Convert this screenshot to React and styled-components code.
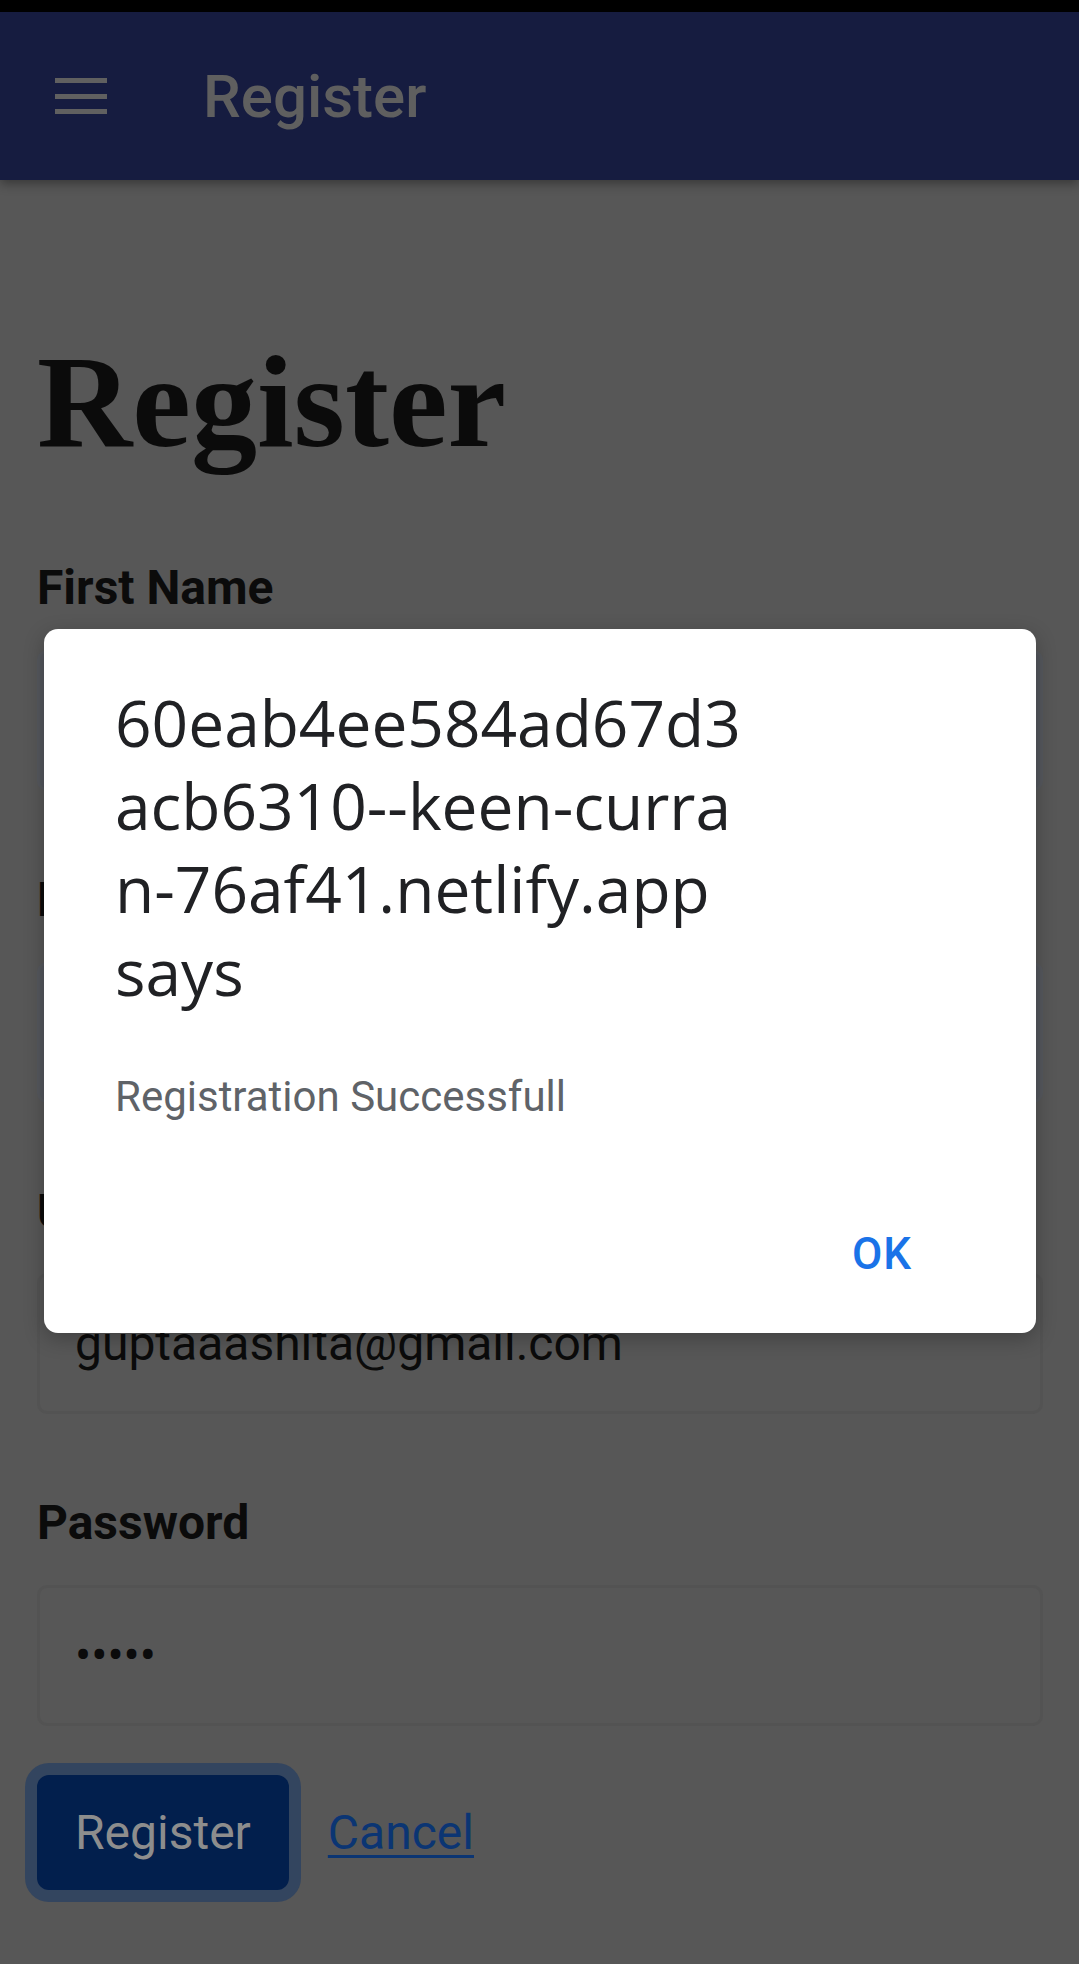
import styled, { createGlobalStyle } from "styled-components";

const GlobalStyle = createGlobalStyle`
  html, body {
    margin: 0;
    padding: 0;
    background: #575757;
  }
  body {
    width: 1079px;
    min-height: 1964px;
    overflow: hidden;
    font-family: Roboto, "Liberation Sans", sans-serif;
  }
  * {
    box-sizing: border-box;
  }
`;

const Screen = styled.div`
  position: relative;
  width: 1079px;
  height: 1964px;
  background: #575757;
`;

const StatusBar = styled.div`
  height: 12px;
  background: #000;
`;

const TopBar = styled.header`
  height: 168px;
  display: flex;
  align-items: center;
  padding-left: 55px;
  gap: 96px;
  background: #161c40;
  box-shadow: 0 4px 10px rgba(0, 0, 0, 0.35);
`;

const BarTitle = styled.span`
  font-family: Roboto, sans-serif;
  font-weight: 500;
  font-size: 60px;
  color: #5f5f5f;
`;

const Main = styled.main`
  padding: 143px 36px 0 37px;
`;

const Heading = styled.h1`
  margin: 0 0 78px;
  font-family: "Liberation Serif", serif;
  font-weight: 700;
  font-size: 132px;
  line-height: 1.2;
  color: #0b0b0b;
`;

const Field = styled.div`
  display: flex;
  flex-direction: column;
  gap: 33px;
  margin-bottom: 80px;
`;

const Label = styled.label`
  font-family: Roboto, sans-serif;
  font-weight: 700;
  font-size: 48px;
  line-height: 1.2;
  color: #0b0b0b;
`;

const Input = styled.input`
  width: 100%;
  height: 141px;
  padding: 0 35px;
  border: 3px solid ${(p) => (p.$autofill ? "#55585d" : "#535353")};
  border-radius: 10px;
  background: ${(p) => (p.$autofill ? "#53565c" : "#575757")};
  font-family: Roboto, sans-serif;
  font-size: 48px;
  color: #0b0b0b;
  outline: none;
`;

const Actions = styled.div`
  display: flex;
  align-items: center;
  gap: 39px;
  margin-top: -31px;
`;

const PrimaryButton = styled.button`
  height: 115px;
  padding: 0 38px;
  border: none;
  border-radius: 12px;
  background: #021f4d;
  box-shadow: 0 0 0 12px #33455f;
  font-family: Roboto, sans-serif;
  font-size: 48px;
  color: #8d8d8d;
`;

const LinkButton = styled.a`
  font-family: Roboto, sans-serif;
  font-size: 48px;
  color: #0b3573;
  text-decoration: underline;
  text-underline-offset: 6px;
  text-decoration-thickness: 3px;
`;

const Dialog = styled.div`
  position: absolute;
  left: 44px;
  top: 629px;
  width: 992px;
  padding: 52px 71px;
  background: #fff;
  border-radius: 14px;
  box-shadow: 0 6px 20px rgba(0, 0, 0, 0.25);
`;

const DialogTitle = styled.div`
  font-family: "Open Sans", sans-serif;
  font-weight: 400;
  font-size: 64px;
  line-height: 83px;
  color: #202124;
`;

const DialogMessage = styled.p`
  margin: 59px 0 0;
  font-family: Roboto, sans-serif;
  font-size: 42px;
  line-height: 1.2;
  color: #5f6368;
`;

const DialogFooter = styled.div`
  display: flex;
  justify-content: flex-end;
  margin-top: 106px;
  padding-right: 53px;
`;

const OkButton = styled.button`
  padding: 0;
  border: none;
  background: none;
  font-family: Roboto, sans-serif;
  font-weight: 500;
  font-size: 44px;
  line-height: 1.2;
  letter-spacing: 1px;
  color: #1a73e8;
`;

const MenuIcon = () => (
  <svg width="52" height="36" viewBox="0 0 52 36">
    <rect x="0" y="0" width="52" height="5" fill="#606060" />
    <rect x="0" y="16" width="52" height="5" fill="#606060" />
    <rect x="0" y="31" width="52" height="5" fill="#606060" />
  </svg>
);

export default function App() {
  return (
    <Screen>
      <GlobalStyle />
      <StatusBar />
      <TopBar>
        <MenuIcon />
        <BarTitle>Register</BarTitle>
      </TopBar>
      <Main>
        <Heading>Register</Heading>
        <Field>
          <Label>First Name</Label>
          <Input $autofill readOnly value="" />
        </Field>
        <Field>
          <Label>Last Name</Label>
          <Input $autofill readOnly value="" />
        </Field>
        <Field>
          <Label>Username</Label>
          <Input readOnly value="guptaaashita@gmail.com" />
        </Field>
        <Field>
          <Label>Password</Label>
          <Input type="password" readOnly value="12345" />
        </Field>
        <Actions>
          <PrimaryButton>Register</PrimaryButton>
          <LinkButton href="#">Cancel</LinkButton>
        </Actions>
      </Main>
      <Dialog>
        <DialogTitle>
          60eab4ee584ad67d3
          <br />
          acb6310--keen-curra
          <br />
          n-76af41.netlify.app
          <br />
          says
        </DialogTitle>
        <DialogMessage>Registration Successfull</DialogMessage>
        <DialogFooter>
          <OkButton>OK</OkButton>
        </DialogFooter>
      </Dialog>
    </Screen>
  );
}
